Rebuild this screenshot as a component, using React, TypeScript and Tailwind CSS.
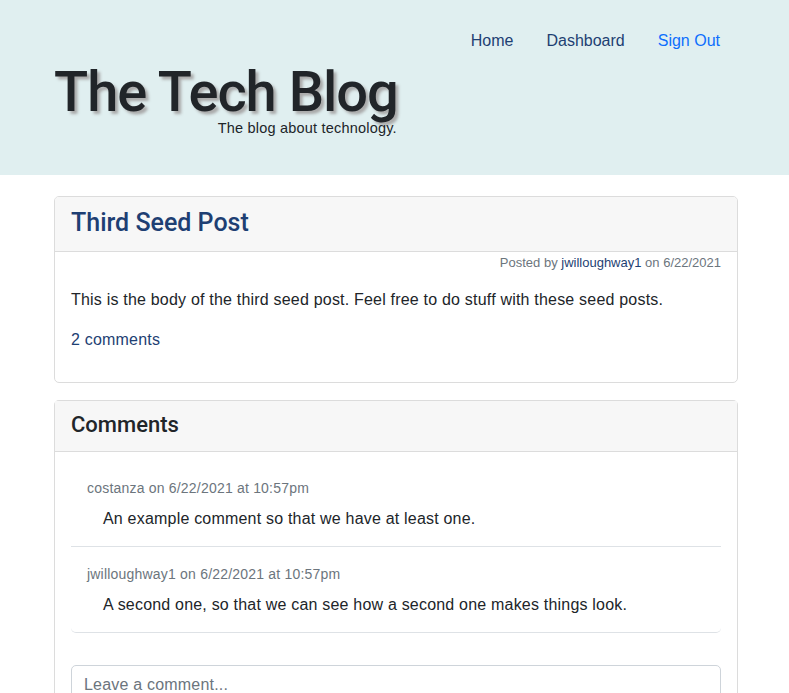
const comments = [
  {
    user: "costanza",
    date: "6/22/2021 at 10:57pm",
    body: "An example comment so that we have at least one.",
  },
  {
    user: "jwilloughway1",
    date: "6/22/2021 at 10:57pm",
    body: "A second one, so that we can see how a second one makes things look.",
  },
];

const App = () => {
  return (
    <div className="min-h-screen bg-white text-[#212529] tracking-[0.2px] font-['Liberation_Sans',Arial,sans-serif]">
      <header className="h-[175px] bg-[#e0eff0]">
        <nav className="flex justify-end gap-[33px] pr-[69px] pt-[29px] text-[16px] tracking-normal">
          <a className="text-[#1e3f73]">Home</a>
          <a className="text-[#1e3f73]">Dashboard</a>
          <a className="text-[#0d6efd]">Sign Out</a>
        </nav>
        <div className="ml-[54px] mt-[6px] inline-flex flex-col items-end">
          <h1 className="text-[56px] leading-[66px] tracking-[-1px] font-medium font-['Roboto',sans-serif] text-[#212529] [text-shadow:3px_3px_3px_#a9a9a9]">
            The Tech Blog
          </h1>
          <p className="text-[14.5px] leading-[18px] -mt-[6px] mr-[1px] tracking-[0.2px]">The blog about technology.</p>
        </div>
      </header>

      <main className="pl-[54px] pr-[51px] pt-[21px] flex flex-col gap-[17px]">
        <section className="border border-[#dcdcdc] rounded-[5px] overflow-hidden">
          <div className="bg-[#f7f7f7] border-b border-[#dcdcdc] h-[55px] px-[16px] pb-[3px] flex items-center">
            <h2 className="text-[25px] text-[#1e3f73] font-medium font-['Roboto',sans-serif] tracking-normal">Third Seed Post</h2>
          </div>
          <div className="px-[16px] pt-[1px] pb-[30px]">
            <p className="text-right text-[13px] tracking-normal text-[#6c757d]">
              Posted by <a className="text-[#1e3f73]">jwilloughway1</a> on 6/22/2021
            </p>
            <p className="mt-[15px] text-[16px]">
              This is the body of the third seed post. Feel free to do stuff with these seed posts.
            </p>
            <a className="block mt-[16px] text-[16px] text-[#1e3f73]">2 comments</a>
          </div>
        </section>

        <section className="border border-[#dcdcdc] rounded-t-[5px] border-b-0">
          <div className="bg-[#f7f7f7] border-b border-[#dcdcdc] h-[51px] px-[16px] pb-[2px] flex items-center">
            <h2 className="text-[22px] font-medium font-['Roboto',sans-serif] tracking-normal">Comments</h2>
          </div>
          <div className="px-[16px] pt-[9px]">
            <ul className="border-b border-[#dee2e6] rounded-b-[5px]">
              {comments.map((c, i) => (
                <li
                  key={i}
                  className={
                    "px-[16px] pt-[17px] pb-[15px] " + (i > 0 ? "border-t border-[#dee2e6]" : "")
                  }
                >
                  <p className="text-[14px] text-[#6c757d]">
                    {c.user} on {c.date}
                  </p>
                  <p className="pl-[16px] mt-[8px] text-[16px]">{c.body}</p>
                </li>
              ))}
            </ul>
            <textarea
              placeholder="Leave a comment..."
              className="mt-[32px] w-full h-[80px] border border-[#ced4da] rounded-[5px] px-[12px] py-[7px] text-[16px] placeholder:text-[#6c757d] resize-none"
            />
          </div>
        </section>
      </main>
    </div>
  );
};

export default App;
